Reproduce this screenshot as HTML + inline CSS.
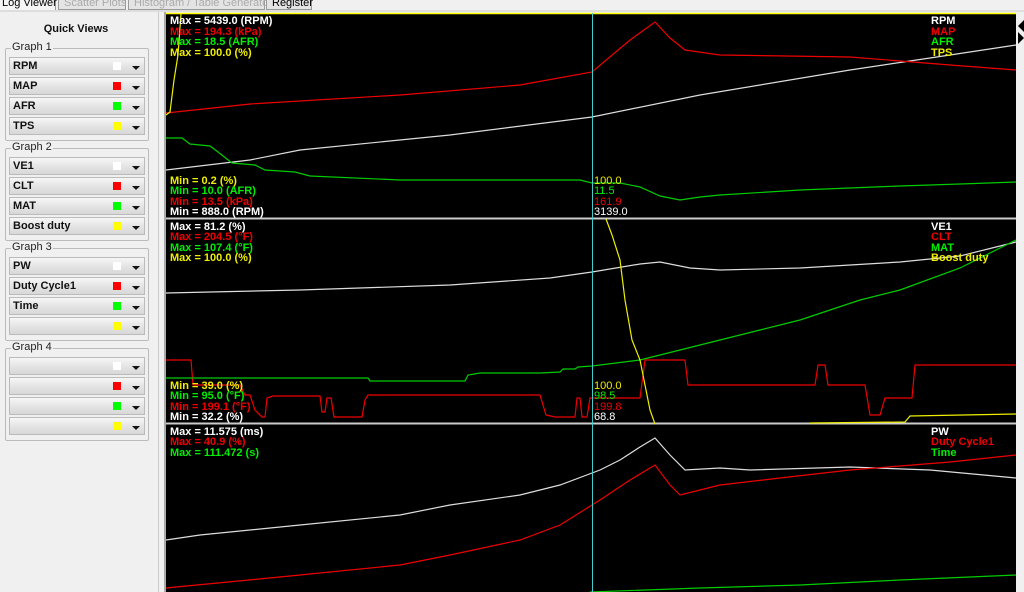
<!DOCTYPE html>
<html><head><meta charset="utf-8"><style>
*{margin:0;padding:0;box-sizing:border-box}
body{width:1024px;height:592px;overflow:hidden;background:#f0f0f0;font-family:"Liberation Sans",Arial,sans-serif;position:relative}
.tab{position:absolute;top:-6px;height:16px;border:1px solid #999;background:#e4e4e4;font-size:11px;padding:2px 5px;color:#aaa;white-space:nowrap}
.left{position:absolute;left:0;top:12px;width:160px;height:580px;background:#f0f0f0}
.qv{position:absolute;left:0;width:152px;top:11px;text-align:center;font-weight:bold;font-size:11px;color:#111}
.grp{position:absolute;left:5px;width:144px;border:1px solid #bbb;border-radius:2px}
.grp .t{position:absolute;left:5px;top:-8px;background:#f0f0f0;font-size:11px;padding:0 1px;color:#222}
.row{position:absolute;left:3px;width:136px;height:18px;border:1px solid #bbb;background:linear-gradient(#f6f6f6,#e2e2e2 60%,#d8d8d8);font-size:11px;font-weight:bold;color:#111;padding:2px 0 0 3px}
.row .sq{position:absolute;left:103px;top:4px;width:8px;height:8px}
.row .ar{position:absolute;left:122px;top:8px;width:0;height:0;border-left:4px solid transparent;border-right:4px solid transparent;border-top:4px solid #111}
svg text{font-family:"Liberation Sans",Arial,sans-serif;font-size:11px;font-weight:bold}
</style></head><body>
<div class="tab" style="left:-4px;width:60px;color:#000;background:#f5f5f5;border-bottom:none">Log Viewer</div>
<div class="tab" style="left:58px;width:68px">Scatter Plots</div>
<div class="tab" style="left:128px;width:137px">Histogram / Table Generator</div>
<div class="tab" style="left:266px;width:46px;color:#000">Register</div>
<div style="position:absolute;left:0;top:10px;width:1024px;height:2px;background:#ddd"></div>
<div class="left">
<div class="qv">Quick Views</div>
<div class="grp" style="top:36px;height:93px"><span class="t">Graph 1</span>
<div class="row" style="top:8px">RPM<span class="sq" style="background:#fff"></span><span class="ar"></span></div>
<div class="row" style="top:28px">MAP<span class="sq" style="background:#f00"></span><span class="ar"></span></div>
<div class="row" style="top:48px">AFR<span class="sq" style="background:#0f0"></span><span class="ar"></span></div>
<div class="row" style="top:68px">TPS<span class="sq" style="background:#ff0"></span><span class="ar"></span></div></div>
<div class="grp" style="top:136px;height:93px"><span class="t">Graph 2</span>
<div class="row" style="top:8px">VE1<span class="sq" style="background:#fff"></span><span class="ar"></span></div>
<div class="row" style="top:28px">CLT<span class="sq" style="background:#f00"></span><span class="ar"></span></div>
<div class="row" style="top:48px">MAT<span class="sq" style="background:#0f0"></span><span class="ar"></span></div>
<div class="row" style="top:68px">Boost duty<span class="sq" style="background:#ff0"></span><span class="ar"></span></div></div>
<div class="grp" style="top:236px;height:93px"><span class="t">Graph 3</span>
<div class="row" style="top:8px">PW<span class="sq" style="background:#fff"></span><span class="ar"></span></div>
<div class="row" style="top:28px">Duty Cycle1<span class="sq" style="background:#f00"></span><span class="ar"></span></div>
<div class="row" style="top:48px">Time<span class="sq" style="background:#0f0"></span><span class="ar"></span></div>
<div class="row" style="top:68px"><span class="sq" style="background:#ff0"></span><span class="ar"></span></div></div>
<div class="grp" style="top:336px;height:93px"><span class="t">Graph 4</span>
<div class="row" style="top:8px"><span class="sq" style="background:#fff"></span><span class="ar"></span></div>
<div class="row" style="top:28px"><span class="sq" style="background:#f00"></span><span class="ar"></span></div>
<div class="row" style="top:48px"><span class="sq" style="background:#0f0"></span><span class="ar"></span></div>
<div class="row" style="top:68px"><span class="sq" style="background:#ff0"></span><span class="ar"></span></div></div>
</div>
<div style="position:absolute;left:158px;top:12px;width:1px;height:580px;background:#ccc"></div>
<div style="position:absolute;left:164px;top:12px;width:2px;height:580px;background:#aaa"></div>
<svg style="position:absolute;left:0;top:0" width="1024" height="592">
<rect x="166" y="13" width="850" height="579" fill="#000"/>
<rect x="1016" y="12" width="8" height="580" fill="#f0f0f0"/>
<polygon points="1024,20 1018,26 1024,32" fill="#000"/>
<polygon points="1018,32 1024,38 1018,44" fill="#000"/>
<line x1="166" y1="13.5" x2="1016" y2="13.5" stroke="#ff0" stroke-width="1.5"/>
<line x1="166" y1="218.5" x2="1016" y2="218.5" stroke="#ccc" stroke-width="2"/>
<line x1="166" y1="423.5" x2="1016" y2="423.5" stroke="#ccc" stroke-width="2"/>
<g fill="none" stroke-width="1.2">
<polyline stroke="#ddd" points="166,170 250,160 300,150 450,135 592,117 700,95 850,70 950,55 1016,45"/>
<polyline stroke="#e00" points="166,113 250,104 400,95 520,85 592,72 630,40 655,22 670,38 685,50 720,55 850,57 950,65 1016,70"/>
<polyline stroke="#0c0" points="166,138 182,138 190,144 210,146 218,152 232,163 255,165 265,170 295,172 310,176 400,180 500,180 580,180 592,183 620,183 640,187 660,196 680,200 700,197 720,195 800,190 900,186 960,184 1016,182"/>
<polyline stroke="#ee0" points="166,115 170,112 174,80 178,55 181,14"/>
<polyline stroke="#ddd" points="166,293 300,290 450,285 550,278 592,272 640,264 660,262 690,268 720,270 800,268 900,262 960,256 1000,246 1016,242"/>
<polyline stroke="#e00" points="166,360 191,360 193,385 240,385 245,395 250,395 255,410 262,417 265,417 267,398 273,396 320,396 322,412 325,412 327,398 331,398 334,417 362,417 365,400 368,395 540,395 546,415 555,417 575,417 577,398 580,398 582,417 587,417 590,398 640,398 645,360 685,360 688,385 815,385 818,365 825,365 828,385 865,385 870,415 880,415 885,398 912,398 915,365 1016,365"/>
<polyline stroke="#0c0" points="166,378 368,378 370,381 465,381 468,375 480,373 540,373 560,372 563,369 575,369 578,367 592,366 640,360 700,345 760,330 800,320 860,300 900,290 960,268 1016,240"/>
<polyline stroke="#ee0" points="606,219 612,235 620,260 625,300 632,340 640,360 646,390 650,410 655,424"/>
<polyline stroke="#ee0" points="810,423 905,422 910,416 1016,414"/>
<polyline stroke="#ddd" points="166,540 200,535 300,525 400,515 450,505 520,495 560,485 600,470 620,460 640,447 655,438 670,455 685,470 720,468 750,470 850,467 930,470 1016,478"/>
<polyline stroke="#e00" points="166,588 300,575 400,565 450,555 520,540 560,525 600,500 630,480 655,465 670,485 680,495 700,490 720,485 780,478 850,470 950,462 1016,455"/>
<polyline stroke="#0c0" points="590,592 700,588 800,585 900,580 1016,575"/>
</g>
<line x1="592.5" y1="13" x2="592.5" y2="592" stroke="#4cc" stroke-width="1"/>
<g>
<text x="170" y="24" fill="#fff">Max = 5439.0 (RPM)</text>
<text x="170" y="35" fill="#e00">Max = 194.3 (kPa)</text>
<text x="170" y="45" fill="#0e0">Max = 18.5 (AFR)</text>
<text x="170" y="56" fill="#ee0">Max = 100.0 (%)</text>
<text x="170" y="184" fill="#ee0">Min = 0.2 (%)</text>
<text x="170" y="194" fill="#0e0">Min = 10.0 (AFR)</text>
<text x="170" y="205" fill="#e00">Min = 13.5 (kPa)</text>
<text x="170" y="215" fill="#fff">Min = 888.0 (RPM)</text>
<text x="931" y="24" fill="#fff">RPM</text>
<text x="931" y="35" fill="#e00">MAP</text>
<text x="931" y="45" fill="#0e0">AFR</text>
<text x="931" y="56" fill="#ee0">TPS</text>
<text x="170" y="230" fill="#fff">Max = 81.2 (%)</text>
<text x="170" y="240" fill="#e00">Max = 204.5 (°F)</text>
<text x="170" y="251" fill="#0e0">Max = 107.4 (°F)</text>
<text x="170" y="261" fill="#ee0">Max = 100.0 (%)</text>
<text x="170" y="389" fill="#ee0">Min = 39.0 (%)</text>
<text x="170" y="399" fill="#0e0">Min = 95.0 (°F)</text>
<text x="170" y="410" fill="#e00">Min = 199.1 (°F)</text>
<text x="170" y="420" fill="#fff">Min = 32.2 (%)</text>
<text x="931" y="230" fill="#fff">VE1</text>
<text x="931" y="240" fill="#e00">CLT</text>
<text x="931" y="251" fill="#0e0">MAT</text>
<text x="931" y="261" fill="#ee0">Boost duty</text>
<text x="170" y="435" fill="#fff">Max = 11.575 (ms)</text>
<text x="170" y="445" fill="#e00">Max = 40.9 (%)</text>
<text x="170" y="456" fill="#0e0">Max = 111.472 (s)</text>
<text x="931" y="435" fill="#fff">PW</text>
<text x="931" y="445" fill="#e00">Duty Cycle1</text>
<text x="931" y="456" fill="#0e0">Time</text>
</g>
<g>
<text x="594" y="184" fill="#ee0" style="font-weight:normal">100.0</text>
<text x="594" y="194" fill="#0e0" style="font-weight:normal">11.5</text>
<text x="594" y="205" fill="#e00" style="font-weight:normal">161.9</text>
<text x="594" y="215" fill="#fff" style="font-weight:normal">3139.0</text>
<text x="594" y="389" fill="#ee0" style="font-weight:normal">100.0</text>
<text x="594" y="399" fill="#0e0" style="font-weight:normal">98.5</text>
<text x="594" y="410" fill="#e00" style="font-weight:normal">199.8</text>
<text x="594" y="420" fill="#fff" style="font-weight:normal">68.8</text>
</g>
</svg>
</body></html>
